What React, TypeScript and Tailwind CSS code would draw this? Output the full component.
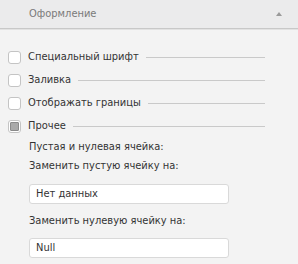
import React from "react";

function Box({ filled }: { filled?: boolean }) {
  if (filled) {
    return (
      <span className="w-[13px] h-[13px] shrink-0 rounded-[3px] border border-[#c4c4c4] bg-white flex items-center justify-center">
        <span className="w-[9px] h-[9px] rounded-[1px] border border-[#8a8a8a] bg-[#a9a9a9]" />
      </span>
    );
  }
  return <span className="w-[13px] h-[13px] shrink-0 rounded-[3px] border border-[#c4c4c4] bg-white" />;
}

function Row({ label, filled }: { label: string; filled?: boolean }) {
  return (
    <div className="h-[23px] flex items-center pl-[8px] pr-[33px]">
      <Box filled={filled} />
      <span className="ml-[7px] text-[#333333] whitespace-nowrap">{label}</span>
      <span className="ml-[7px] flex-1 h-px bg-[#c9c9c9]" />
    </div>
  );
}

export default function App() {
  return (
    <div
      className="w-[298px] h-[264px] bg-[#f3f3f3] text-[11px] overflow-hidden"
      style={{ fontFamily: '"DejaVu Sans Condensed", "Liberation Sans", Arial, sans-serif' }}
    >
      <div className="h-[29px] bg-[#ebebec] border-b border-[#c8c8c8] shadow-[0_1px_0_#e2e2e2] flex items-center pl-[29px] pr-[16px]">
        <span className="text-[#7a7a7a] flex-1">Оформление</span>
        <svg width="6" height="4" viewBox="0 0 6 4">
          <polygon points="3,0 6,4 0,4" fill="#9a9a9a" />
        </svg>
      </div>
      <div className="pt-[17px]">
        <Row label="Специальный шрифт" />
        <Row label="Заливка" />
        <Row label="Отображать границы" />
        <Row label="Прочее" filled />
        <div className="pl-[29px] text-[#333333]">
          <div className="h-[19px] flex items-center">Пустая и нулевая ячейка:</div>
          <div className="h-[19px] flex items-center">Заменить пустую ячейку на:</div>
          <div className="mt-[8px] w-[200px] h-[20px] rounded-[3px] border border-[#d9d9d9] bg-white flex items-center pl-[6px]">
            Нет данных
          </div>
          <div className="mt-[8px] h-[18px] flex items-center">Заменить нулевую ячейку на:</div>
          <div className="mt-[8px] w-[200px] h-[20px] rounded-[3px] border border-[#d9d9d9] bg-white flex items-center pl-[6px]">
            Null
          </div>
        </div>
      </div>
    </div>
  );
}
